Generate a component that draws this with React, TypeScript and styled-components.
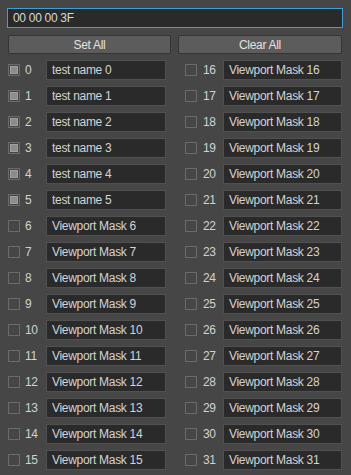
import styled, { createGlobalStyle } from 'styled-components';

const GlobalStyle = createGlobalStyle`
  html, body {
    margin: 0;
    background: #464646;
  }
  body {
    font-family: 'Liberation Sans', Arial, sans-serif;
    font-size: 12px;
    letter-spacing: -0.3px;
    color: #d4d4d4;
  }
`;

const names: Record<number, string> = {
  0: 'test name 0',
  1: 'test name 1',
  2: 'test name 2',
  3: 'test name 3',
  4: 'test name 4',
  5: 'test name 5',
};

const masks = Array.from({ length: 32 }, (_, i) => ({
  index: i,
  checked: i < 6,
  name: names[i] ?? `Viewport Mask ${i}`,
}));

const MaskRow = ({ index, checked, name, right }: { index: number; checked: boolean; name: string; right: boolean }) => (
  <Row>
    <CheckBox $checked={checked} />
    <Index $right={right}>{index}</Index>
    <NameBox $right={right}>{name}</NameBox>
  </Row>
);

export default function App() {
  const left = masks.slice(0, 16);
  const right = masks.slice(16);

  return (
    <>
      <GlobalStyle />
      <Panel>
        <HexInput>00 00 00 3F</HexInput>
        <Buttons>
          <Button>Set All</Button>
          <Button>Clear All</Button>
        </Buttons>
        <Columns>
          <Column>
            {left.map((m) => (
              <MaskRow key={m.index} {...m} right={false} />
            ))}
          </Column>
          <Column>
            {right.map((m) => (
              <MaskRow key={m.index} {...m} right />
            ))}
          </Column>
        </Columns>
      </Panel>
    </>
  );
}

const Panel = styled.div`
  width: 351px;
  height: 475px;
  box-sizing: border-box;
  padding: 8px 8px 0 7px;
  display: flex;
  flex-direction: column;
`;

const HexInput = styled.div`
  height: 20px;
  width: 336px;
  box-sizing: border-box;
  border: 1px solid #3d9fd6;
  background: #2a2a2b;
  color: #d8d8d8;
  padding-left: 5px;
  display: flex;
  align-items: center;
`;

const Buttons = styled.div`
  margin: 7px 0 0 1px;
  display: grid;
  grid-template-columns: 163px 164px;
  column-gap: 7px;
`;

const Button = styled.div`
  height: 19px;
  box-sizing: border-box;
  border: 1px solid #343434;
  border-radius: 2px;
  background: #5c5c5c;
  color: #e2e2e2;
  display: flex;
  align-items: center;
  justify-content: center;
`;

const Columns = styled.div`
  margin: 6px 0 0 1px;
  display: grid;
  grid-template-columns: 158px 157px;
  column-gap: 19px;
`;

const Column = styled.div`
  display: flex;
  flex-direction: column;
  gap: 6px;
`;

const Row = styled.div`
  height: 20px;
  display: flex;
  align-items: center;
`;

const CheckBox = styled.div<{ $checked: boolean }>`
  width: 12px;
  height: 12px;
  box-sizing: border-box;
  border: 1px solid #6b6b6b;
  background: #464646;
  position: relative;
  flex: none;

  &::after {
    content: '';
    display: ${({ $checked }) => ($checked ? 'block' : 'none')};
    position: absolute;
    inset: 1px;
    background: #8c8c8c;
    border: 1px solid #a0a0a0;
  }
`;

const Index = styled.span<{ $right: boolean }>`
  width: 26px;
  padding-left: ${({ $right }) => ($right ? '6px' : '5px')};
  box-sizing: border-box;
  color: #cfd2d6;
  flex: none;
`;

const NameBox = styled.div<{ $right: boolean }>`
  width: ${({ $right }) => ($right ? '119px' : '120px')};
  height: 20px;
  box-sizing: border-box;
  border: 1px solid #505050;
  background: #2a2a2b;
  color: #d4d4d4;
  padding-left: 5px;
  display: flex;
  align-items: center;
  flex: none;
`;
